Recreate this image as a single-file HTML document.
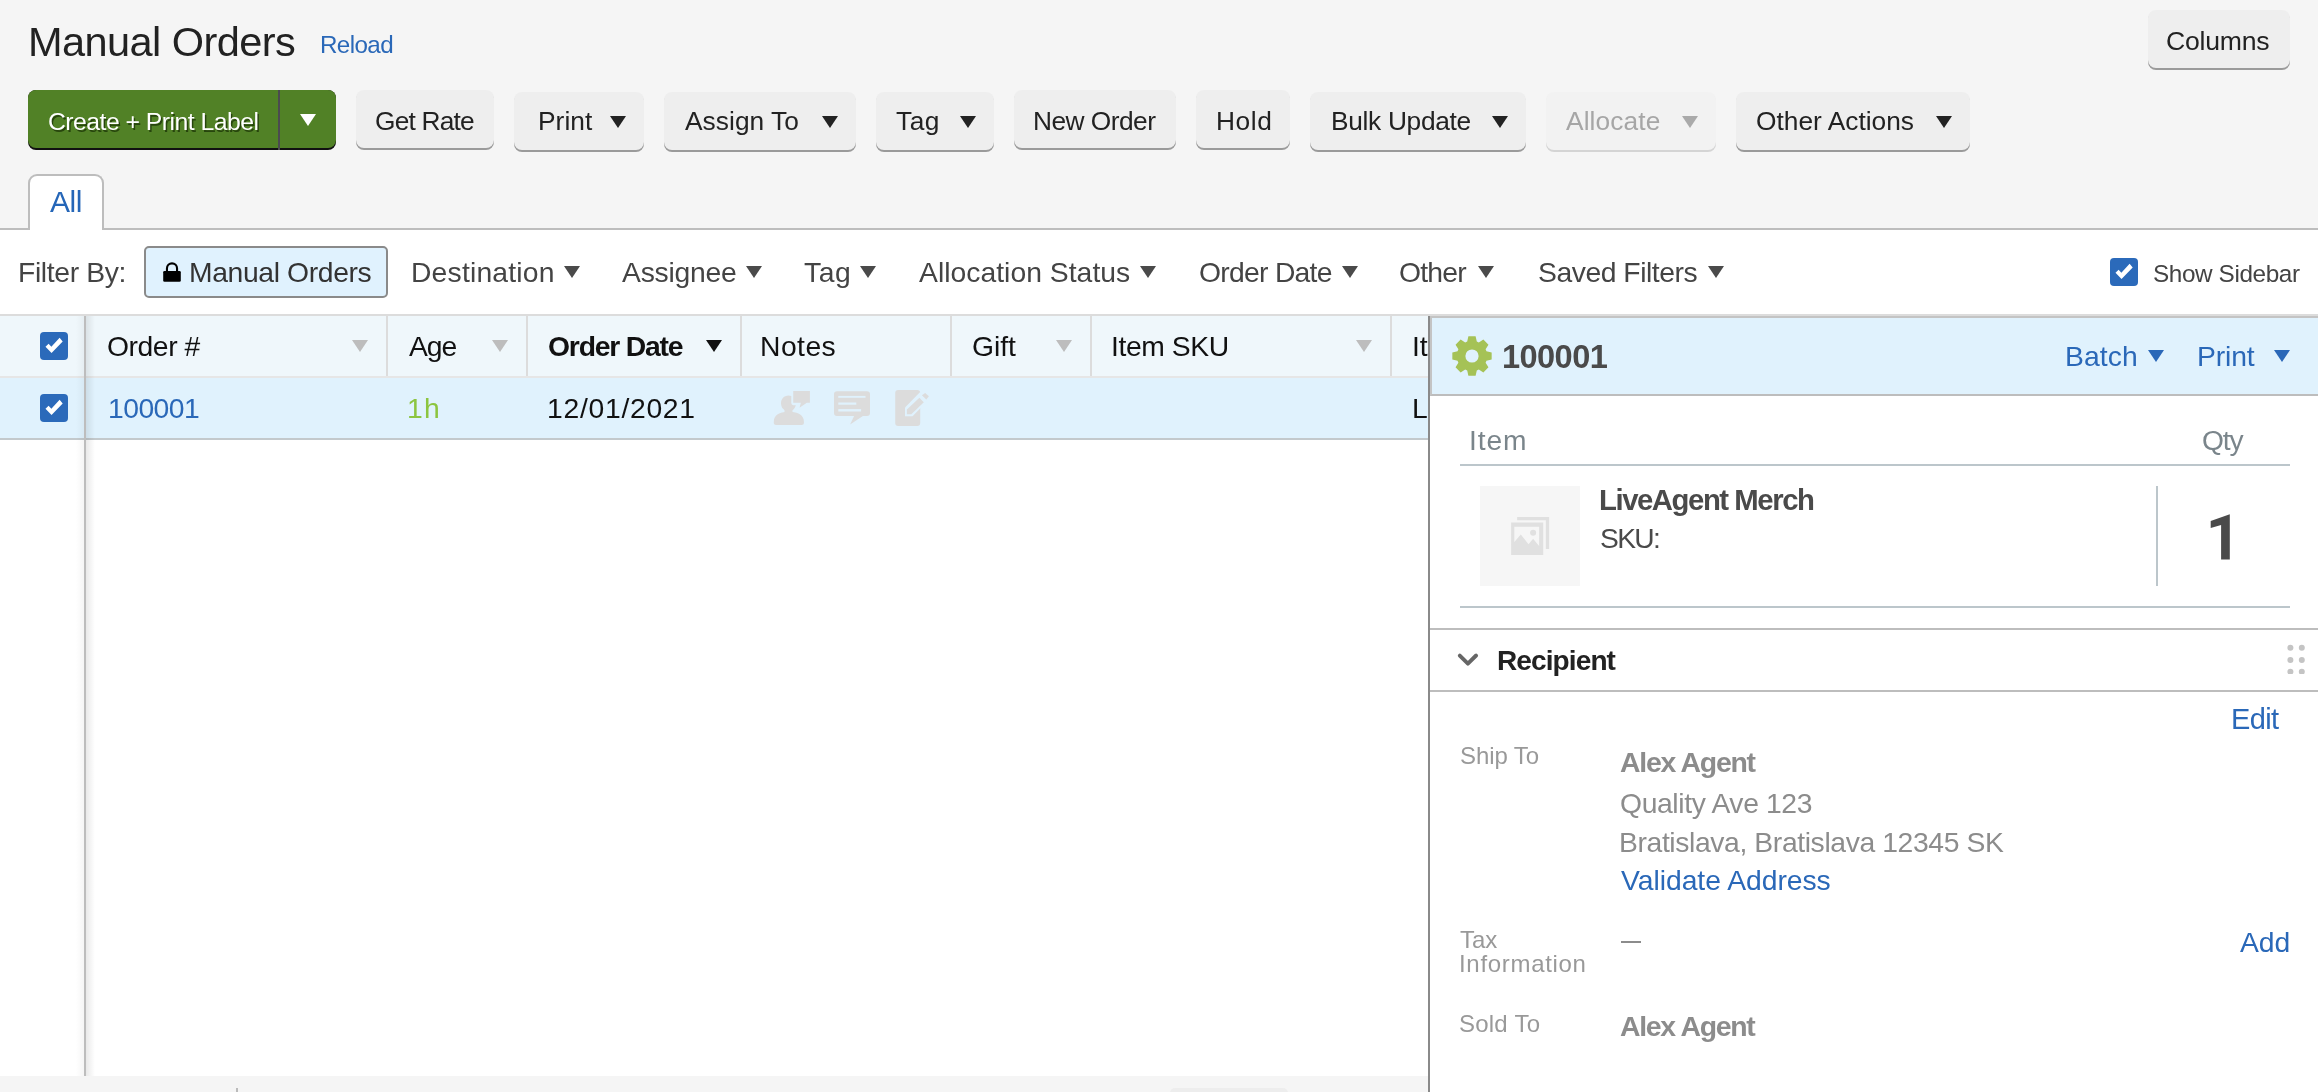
<!DOCTYPE html>
<html><head><meta charset="utf-8">
<style>
html,body{margin:0;padding:0;}
body{width:2318px;height:1092px;position:relative;overflow:hidden;background:#fff;font-family:"Liberation Sans",sans-serif;}
.a{position:absolute;box-sizing:border-box;}
.t{position:absolute;white-space:pre;line-height:0;will-change:transform;font-family:"Liberation Sans",sans-serif;}
.btn{position:absolute;box-sizing:border-box;background:#eeeeee;border-radius:8px;box-shadow:0 2px 0 #9a9a9a;}
.tri{position:absolute;width:0;height:0;border-left:8px solid transparent;border-right:8px solid transparent;border-top:12px solid #222;}
.cb{position:absolute;width:28px;height:28px;background:#2b6aba;border-radius:4px;}
.cb svg{position:absolute;left:0;top:0;}
</style></head><body>
<!-- top gray header -->
<div class="a" style="left:0;top:0;width:2318px;height:229px;background:#f5f5f5;"></div>
<div class="a" style="left:0;top:228px;width:2318px;height:2px;background:#bdbdbd;"></div>
<!-- tab All -->
<div class="a" style="left:28px;top:174px;width:76px;height:56px;background:#fff;border:2px solid #bdbdbd;border-bottom:none;border-radius:9px 9px 0 0;"></div>

<!-- green button -->
<div class="a" style="left:28px;top:90px;width:308px;height:60px;background:#111;border-radius:8px;"></div>
<div class="a" style="left:28px;top:90px;width:308px;height:58px;background:#518126;border-radius:8px;"></div>
<div class="a" style="left:278px;top:90px;width:2px;height:60px;background:#4b4a50;"></div>
<div class="tri" style="left:300px;top:114px;border-top-color:#fff;"></div>

<!-- gray buttons -->
<div class="btn" style="left:356px;top:90px;width:138px;height:58px;"></div>
<div class="btn" style="left:514px;top:92px;width:130px;height:58px;"></div>
<div class="btn" style="left:664px;top:92px;width:192px;height:58px;"></div>
<div class="btn" style="left:876px;top:92px;width:118px;height:58px;"></div>
<div class="btn" style="left:1014px;top:90px;width:162px;height:58px;"></div>
<div class="btn" style="left:1196px;top:90px;width:94px;height:58px;"></div>
<div class="btn" style="left:1310px;top:92px;width:216px;height:58px;"></div>
<div class="btn" style="left:1546px;top:92px;width:170px;height:58px;background:#f2f2f2;box-shadow:0 2px 0 #d4d4d4;"></div>
<div class="btn" style="left:1736px;top:92px;width:234px;height:58px;"></div>
<div class="btn" style="left:2148px;top:10px;width:142px;height:58px;"></div>
<div class="tri" style="left:610px;top:116px;"></div>
<div class="tri" style="left:822px;top:116px;"></div>
<div class="tri" style="left:960px;top:116px;"></div>
<div class="tri" style="left:1492px;top:116px;"></div>
<div class="tri" style="left:1682px;top:116px;border-top-color:#aaa;"></div>
<div class="tri" style="left:1936px;top:116px;"></div>

<!-- filter bar -->
<div class="a" style="left:144px;top:246px;width:244px;height:52px;background:#e0f2fe;border:2px solid #8a8a8a;border-radius:5px;"></div>
<svg class="a" style="left:163px;top:262px;" width="18" height="20" viewBox="0 0 18 20"><path d="M2.9,10 V6.4 A6.1,6.1 0 0 1 15.1,6.4 V10 H13 V6.4 A4,4 0 0 0 5,6.4 V10 Z" fill="#000"/><rect x="0.2" y="9" width="17.6" height="10.7" rx="1.3" fill="#000"/></svg>
<div class="tri" style="left:564px;top:266px;border-top-color:#4a4a4a;"></div>
<div class="tri" style="left:746px;top:266px;border-top-color:#4a4a4a;"></div>
<div class="tri" style="left:860px;top:266px;border-top-color:#4a4a4a;"></div>
<div class="tri" style="left:1140px;top:266px;border-top-color:#4a4a4a;"></div>
<div class="tri" style="left:1342px;top:266px;border-top-color:#4a4a4a;"></div>
<div class="tri" style="left:1478px;top:266px;border-top-color:#4a4a4a;"></div>
<div class="tri" style="left:1708px;top:266px;border-top-color:#4a4a4a;"></div>
<div class="cb" style="left:2110px;top:258px;"><svg width="28" height="28"><polygon points="5.5,14.65 8.6,11.7 11.36,14.65 19.6,5.86 22.7,9.5 11.54,21.07" fill="#fff"/></svg></div>

<!-- table -->
<div class="a" style="left:0;top:314px;width:2318px;height:2px;background:#dcdcdc;"></div>
<div class="a" style="left:0;top:316px;width:1428px;height:60px;background:#eff7fb;"></div>
<div class="a" style="left:0;top:376px;width:1428px;height:2px;background:#e6e6e6;"></div>
<div class="a" style="left:0;top:378px;width:1428px;height:60px;background:#e0f2fd;"></div>
<div class="a" style="left:0;top:438px;width:1428px;height:2px;background:#c3c9cc;"></div>
<!-- col dividers header -->
<div class="a" style="left:386px;top:316px;width:2px;height:60px;background:#dcdcdc;"></div>
<div class="a" style="left:526px;top:316px;width:2px;height:60px;background:#dcdcdc;"></div>
<div class="a" style="left:740px;top:316px;width:2px;height:60px;background:#dcdcdc;"></div>
<div class="a" style="left:950px;top:316px;width:2px;height:60px;background:#dcdcdc;"></div>
<div class="a" style="left:1090px;top:316px;width:2px;height:60px;background:#dcdcdc;"></div>
<div class="a" style="left:1390px;top:316px;width:2px;height:60px;background:#dcdcdc;"></div>
<!-- left frozen col divider + shadow -->
<div class="a" style="left:86px;top:316px;width:9px;height:760px;background:linear-gradient(to right,rgba(0,0,0,.085),rgba(0,0,0,0));"></div>
<div class="a" style="left:76px;top:316px;width:8px;height:760px;background:linear-gradient(to left,rgba(0,0,0,.04),rgba(0,0,0,0));"></div>
<div class="a" style="left:84px;top:316px;width:2px;height:760px;background:#bdbdbd;"></div>
<div class="cb" style="left:40px;top:332px;"><svg width="28" height="28"><polygon points="5.5,14.65 8.6,11.7 11.36,14.65 19.6,5.86 22.7,9.5 11.54,21.07" fill="#fff"/></svg></div>
<div class="cb" style="left:40px;top:394px;"><svg width="28" height="28"><polygon points="5.5,14.65 8.6,11.7 11.36,14.65 19.6,5.86 22.7,9.5 11.54,21.07" fill="#fff"/></svg></div>
<div class="tri" style="left:352px;top:340px;border-top-color:#bdbdbd;"></div>
<div class="tri" style="left:492px;top:340px;border-top-color:#bdbdbd;"></div>
<div class="tri" style="left:706px;top:340px;border-top-color:#111;"></div>
<div class="tri" style="left:1056px;top:340px;border-top-color:#bdbdbd;"></div>
<div class="tri" style="left:1356px;top:340px;border-top-color:#bdbdbd;"></div>
<!-- notes icons -->
<svg class="a" style="left:765px;top:382px;" width="170" height="50" viewBox="0 0 170 50">
 <g fill="#dcdcdc">
  <path d="M8.8,42.9 V39.5 C8.8,33.5 14.5,30 20.5,30 H27 C33,30 38.9,33.5 38.9,39.5 V41 C38.9,42.2 38,42.9 36.8,42.9 H10.9 C9.7,42.9 8.8,42.2 8.8,41 Z"/>
  <rect x="19.5" y="26" width="8" height="6"/>
  <path d="M23.5,13.4 C19,13.4 16,17 16,21.3 C16,25.6 19,29.2 23.5,29.2 C27.2,29.2 29.9,27 30.8,23.2 H28.6 C27.2,23.2 26.3,22.2 26.3,20.8 V13.9 C25.4,13.6 24.5,13.4 23.5,13.4 Z"/>
  <path d="M28.2,8.9 H44.9 V20.7 H41.8 L34.5,25.7 L35.9,20.7 H28.2 Z"/>
  <path d="M72,9.2 H102 A3,3 0 0 1 105,12.2 V30.9 A3,3 0 0 1 102,33.9 H97.9 L85.1,42.5 L89.1,33.9 H72 A3,3 0 0 1 69,30.9 V12.2 A3,3 0 0 1 72,9.2 Z"/>
  <rect x="130.2" y="8.1" width="25" height="35.8" rx="3"/>
 </g>
 <g fill="#e0f2fd">
  <rect x="73.3" y="13.9" width="27.2" height="1.9"/>
  <rect x="73.3" y="20.5" width="18" height="2.2"/>
  <rect x="73.3" y="27.1" width="22.8" height="2.4"/>
  <polygon points="140,25.5 155.2,10 161,16 160,21.5 147.5,34.2 140,34.2" />
 </g>
 <polygon fill="#dcdcdc" points="141.9,27.5 154.4,15.8 158.8,20.2 146.3,32.3 141.9,32.3"/>
 <polygon fill="#dcdcdc" points="156.9,13.2 160.2,10.9 163.9,14.3 161.3,17.6"/>
</svg>

<!-- footer -->
<div class="a" style="left:0;top:1076px;width:1428px;height:16px;background:#f5f5f5;"></div>
<div class="a" style="left:236px;top:1088px;width:2px;height:4px;background:#bbb;"></div>
<div class="a" style="left:1170px;top:1088px;width:118px;height:10px;background:#ededed;border-radius:8px;"></div>

<!-- sidebar -->
<div class="a" style="left:1428px;top:316px;width:890px;height:776px;background:#fff;"></div>
<div class="a" style="left:1428px;top:316px;width:2px;height:776px;background:#8a8a8a;"></div>
<div class="a" style="left:1430px;top:316px;width:888px;height:80px;background:#e0f2fd;border-top:2px solid #c4c4c4;border-left:2px solid #c4c4c4;border-bottom:2px solid #bdbdbd;"></div>
<svg class="a" style="left:1452px;top:336px;" width="40" height="40" viewBox="0 0 40 40"><polygon fill="#a5c256" points="15.20,5.58 16.40,0.33 23.60,0.33 24.80,5.58 25.31,5.76 25.82,5.96 26.31,6.17 26.80,6.41 31.37,3.54 36.46,8.63 33.59,13.20 33.83,13.69 34.04,14.18 34.24,14.69 34.42,15.20 39.67,16.40 39.67,23.60 34.42,24.80 34.24,25.31 34.04,25.82 33.83,26.31 33.59,26.80 36.46,31.37 31.37,36.46 26.80,33.59 26.31,33.83 25.82,34.04 25.31,34.24 24.80,34.42 23.60,39.67 16.40,39.67 15.20,34.42 14.69,34.24 14.18,34.04 13.69,33.83 13.20,33.59 8.63,36.46 3.54,31.37 6.41,26.80 6.17,26.31 5.96,25.82 5.76,25.31 5.58,24.80 0.33,23.60 0.33,16.40 5.58,15.20 5.76,14.69 5.96,14.18 6.17,13.69 6.41,13.20 3.54,8.63 8.63,3.54 13.20,6.41 13.69,6.17 14.18,5.96 14.69,5.76"/><circle cx="20" cy="20" r="6.6" fill="#e0f2fd"/></svg>
<div class="tri" style="left:2148px;top:350px;border-top-color:#2a68b8;"></div>
<div class="tri" style="left:2274px;top:350px;border-top-color:#2a68b8;"></div>
<!-- items table -->
<div class="a" style="left:1460px;top:464px;width:830px;height:2px;background:#bcc6cb;"></div>
<div class="a" style="left:1480px;top:486px;width:100px;height:100px;background:#f6f6f6;"></div>
<svg class="a" style="left:1480px;top:486px;" width="100" height="100" viewBox="0 0 100 100">
 <g fill="#e0e0e0">
  <path d="M37.1,31.1 H69.1 V63 H65.8 V34.3 H37.1 Z"/>
  <path fill-rule="evenodd" d="M31.1,36.6 H63.2 V68.9 H31.1 Z M34.3,40.8 V55.9 L40.8,48.5 L48.5,58.2 L53.1,52.7 L59.1,60 V40.8 Z"/>
  <circle cx="53.1" cy="46.7" r="3"/>
 </g>
</svg>
<div class="a" style="left:2156px;top:486px;width:2px;height:100px;background:#bcc6cb;"></div>
<div class="a" style="left:1460px;top:606px;width:830px;height:2px;background:#bcc6cb;"></div>
<div class="a" style="left:1430px;top:628px;width:888px;height:2px;background:#bdbdbd;"></div>
<div class="a" style="left:1430px;top:690px;width:888px;height:2px;background:#bdbdbd;"></div>
<svg class="a" style="left:1456px;top:650px;" width="26" height="20" viewBox="0 0 26 20"><polyline points="3.8,5.6 11.9,13.6 20.1,5.5" fill="none" stroke="#666" stroke-width="3.9" stroke-linecap="round" stroke-linejoin="round"/></svg>
<svg class="a" style="left:2284px;top:642px;" width="24" height="32" viewBox="0 0 24 32">
 <g fill="#c4c4c4"><circle cx="6.4" cy="5.8" r="3"/><circle cx="17.8" cy="5.8" r="3"/><circle cx="6.4" cy="18" r="3"/><circle cx="17.8" cy="18" r="3"/><circle cx="6.4" cy="29.7" r="3"/><circle cx="17.8" cy="29.7" r="3"/></g>
</svg>
<div class="a" style="left:1621px;top:941px;width:19.5px;height:2px;background:#8c8c8c;"></div>

<svg class="a" style="left:2200px;top:505px;" width="45" height="65" viewBox="2200 505 45 65"><polygon fill="#4a4a4a" points="2229.8,514.2 2229.8,559.5 2221.1,559.5 2221.1,524.9 2210.7,527.9 2210.7,521.1"/></svg>
<div class="t" id="title" style="left:27.82px;top:41.52px;font-size:41.5px;font-weight:400;color:#222;letter-spacing:-0.554px;">Manual Orders</div>
<div class="t" id="reload" style="left:319.50px;top:45.41px;font-size:24.2px;font-weight:400;color:#2a68b8;letter-spacing:-0.607px;">Reload</div>
<div class="t" id="cpl" style="left:47.75px;top:122.41px;font-size:24.8px;font-weight:400;color:#fff;letter-spacing:-0.542px;text-shadow:1.5px 1.5px 0.4px rgba(25,50,5,.75);">Create + Print Label</div>
<div class="t" id="getrate" style="left:375.42px;top:120.89px;font-size:26.3px;font-weight:400;color:#222;letter-spacing:-0.811px;">Get Rate</div>
<div class="t" id="print" style="left:538.29px;top:120.89px;font-size:26.3px;font-weight:400;color:#222;letter-spacing:0.072px;">Print</div>
<div class="t" id="assign" style="left:685.42px;top:120.89px;font-size:26.3px;font-weight:400;color:#222;letter-spacing:0.051px;">Assign To</div>
<div class="t" id="tag" style="left:895.60px;top:120.89px;font-size:26.3px;font-weight:400;color:#222;letter-spacing:0.550px;">Tag</div>
<div class="t" id="neworder" style="left:1033.29px;top:120.89px;font-size:26.3px;font-weight:400;color:#222;letter-spacing:-0.521px;">New Order</div>
<div class="t" id="hold" style="left:1216.29px;top:120.89px;font-size:26.3px;font-weight:400;color:#222;letter-spacing:0.578px;">Hold</div>
<div class="t" id="bulk" style="left:1330.79px;top:120.89px;font-size:26.3px;font-weight:400;color:#222;letter-spacing:-0.305px;">Bulk Update</div>
<div class="t" id="alloc" style="left:1565.92px;top:120.89px;font-size:26.3px;font-weight:400;color:#a6a6a6;letter-spacing:0.105px;">Allocate</div>
<div class="t" id="other" style="left:1755.71px;top:120.89px;font-size:26.3px;font-weight:400;color:#222;letter-spacing:0.011px;">Other Actions</div>
<div class="t" id="columns" style="left:2166.35px;top:40.78px;font-size:26.6px;font-weight:400;color:#222;letter-spacing:-0.240px;">Columns</div>
<div class="t" id="all" style="left:49.84px;top:201.60px;font-size:30px;font-weight:400;color:#2566b8;letter-spacing:-0.473px;">All</div>
<div class="t" id="filterby" style="left:17.62px;top:272.19px;font-size:28.3px;font-weight:400;color:#444;letter-spacing:-0.352px;">Filter By:</div>
<div class="t" id="chip" style="left:188.62px;top:272.19px;font-size:28.3px;font-weight:400;color:#333;letter-spacing:-0.368px;">Manual Orders</div>
<div class="t" id="f_dest" style="left:410.62px;top:272.19px;font-size:28.3px;font-weight:400;color:#444;letter-spacing:0.188px;">Destination</div>
<div class="t" id="f_assg" style="left:621.84px;top:272.19px;font-size:28.3px;font-weight:400;color:#444;letter-spacing:-0.222px;">Assignee</div>
<div class="t" id="f_tag" style="left:803.93px;top:272.19px;font-size:28.3px;font-weight:400;color:#444;letter-spacing:0.567px;">Tag</div>
<div class="t" id="f_alloc" style="left:918.84px;top:272.19px;font-size:28.3px;font-weight:400;color:#444;letter-spacing:0.025px;">Allocation Status</div>
<div class="t" id="f_date" style="left:1198.92px;top:272.19px;font-size:28.3px;font-weight:400;color:#444;letter-spacing:-0.719px;">Order Date</div>
<div class="t" id="f_other" style="left:1399.42px;top:272.19px;font-size:28.3px;font-weight:400;color:#444;letter-spacing:-0.765px;">Other</div>
<div class="t" id="f_saved" style="left:1537.79px;top:272.19px;font-size:28.3px;font-weight:400;color:#444;letter-spacing:-0.456px;">Saved Filters</div>
<div class="t" id="showsb" style="left:2152.63px;top:273.78px;font-size:24.3px;font-weight:400;color:#444;letter-spacing:-0.389px;">Show Sidebar</div>
<div class="t" id="h_order" style="left:107.42px;top:346.49px;font-size:28.3px;font-weight:400;color:#111;letter-spacing:-0.435px;">Order #</div>
<div class="t" id="h_age" style="left:408.84px;top:346.49px;font-size:28.3px;font-weight:400;color:#111;letter-spacing:-1.110px;">Age</div>
<div class="t" id="h_date" style="left:548.09px;top:346.49px;font-size:28.3px;font-weight:700;color:#111;letter-spacing:-1.188px;">Order Date</div>
<div class="t" id="h_notes" style="left:760.12px;top:346.49px;font-size:28.3px;font-weight:400;color:#111;letter-spacing:0.462px;">Notes</div>
<div class="t" id="h_gift" style="left:972.12px;top:346.49px;font-size:28.3px;font-weight:400;color:#111;letter-spacing:-0.028px;">Gift</div>
<div class="t" id="h_sku" style="left:1110.54px;top:346.49px;font-size:28.3px;font-weight:400;color:#111;letter-spacing:-0.415px;">Item SKU</div>
<div class="t" id="h_it" style="left:1411.54px;top:346.49px;font-size:28.3px;font-weight:400;color:#111;letter-spacing:0.000px;clip-path:polygon(-30px -60px,16.46px -60px,16.46px 60px,-30px 60px);">It</div>
<div class="t" id="r_order" style="left:108.29px;top:408.39px;font-size:28.3px;font-weight:400;color:#2a68b8;letter-spacing:-0.539px;">100001</div>
<div class="t" id="r_age" style="left:407.29px;top:408.39px;font-size:28.3px;font-weight:400;color:#8cc540;letter-spacing:1.159px;">1h</div>
<div class="t" id="r_date" style="left:547.29px;top:408.39px;font-size:28.3px;font-weight:400;color:#111;letter-spacing:0.715px;">12/01/2021</div>
<div class="t" id="r_l" style="left:1411.62px;top:408.39px;font-size:28.3px;font-weight:400;color:#111;letter-spacing:0.000px;clip-path:polygon(-30px -60px,16.38px -60px,16.38px 60px,-30px 60px);">L</div>
<div class="t" id="s_num" style="left:1502.26px;top:356.60px;font-size:32.6px;font-weight:700;color:#4a4a4a;letter-spacing:-0.585px;">100001</div>
<div class="t" id="s_batch" style="left:2065.12px;top:356.39px;font-size:28.3px;font-weight:400;color:#2a68b8;letter-spacing:0.110px;">Batch</div>
<div class="t" id="s_print" style="left:2197.12px;top:356.39px;font-size:28.3px;font-weight:400;color:#2a68b8;letter-spacing:-0.127px;">Print</div>
<div class="t" id="s_item" style="left:1469.08px;top:440.23px;font-size:28.2px;font-weight:400;color:#7a858b;letter-spacing:0.881px;">Item</div>
<div class="t" id="s_qty" style="left:2201.54px;top:440.23px;font-size:28.2px;font-weight:400;color:#7a858b;letter-spacing:-1.067px;">Qty</div>
<div class="t" id="s_merch" style="left:1599.00px;top:500.25px;font-size:29.3px;font-weight:700;color:#4a4a4a;letter-spacing:-1.440px;">LiveAgent Merch</div>
<div class="t" id="s_sku" style="left:1599.80px;top:538.23px;font-size:28.2px;font-weight:400;color:#4a4a4a;letter-spacing:-1.672px;">SKU:</div>
<div class="t" id="s_recip" style="left:1497.00px;top:660.90px;font-size:28px;font-weight:700;color:#222;letter-spacing:-0.888px;">Recipient</div>
<div class="t" id="s_edit" style="left:2231.45px;top:718.55px;font-size:29px;font-weight:400;color:#2a68b8;letter-spacing:-0.643px;">Edit</div>
<div class="t" id="s_shipto" style="left:1459.73px;top:755.78px;font-size:24px;font-weight:400;color:#999;letter-spacing:-0.081px;">Ship To</div>
<div class="t" id="s_alex1" style="left:1619.97px;top:762.46px;font-size:28.4px;font-weight:700;color:#8c8c8c;letter-spacing:-1.241px;">Alex Agent</div>
<div class="t" id="s_addr1" style="left:1620.48px;top:802.69px;font-size:28.3px;font-weight:400;color:#8c8c8c;letter-spacing:-0.374px;">Quality Ave 123</div>
<div class="t" id="s_addr2" style="left:1618.62px;top:842.19px;font-size:28.3px;font-weight:400;color:#8c8c8c;letter-spacing:-0.384px;">Bratislava, Bratislava 12345 SK</div>
<div class="t" id="s_validate" style="left:1620.59px;top:880.19px;font-size:28.3px;font-weight:400;color:#2a68b8;letter-spacing:-0.034px;">Validate Address</div>
<div class="t" id="s_tax" style="left:1459.79px;top:940.38px;font-size:24px;font-weight:400;color:#999;letter-spacing:0.000px;">Tax</div>
<div class="t" id="s_info" style="left:1459.03px;top:963.88px;font-size:24px;font-weight:400;color:#999;letter-spacing:0.686px;">Information</div>
<div class="t" id="s_add" style="left:2240.34px;top:941.59px;font-size:28.3px;font-weight:400;color:#2a68b8;letter-spacing:-0.073px;">Add</div>
<div class="t" id="s_soldto" style="left:1459.23px;top:1023.68px;font-size:24px;font-weight:400;color:#999;letter-spacing:0.228px;">Sold To</div>
<div class="t" id="s_alex2" style="left:1619.97px;top:1025.66px;font-size:28.4px;font-weight:700;color:#8c8c8c;letter-spacing:-1.272px;">Alex Agent</div>
</body></html>
